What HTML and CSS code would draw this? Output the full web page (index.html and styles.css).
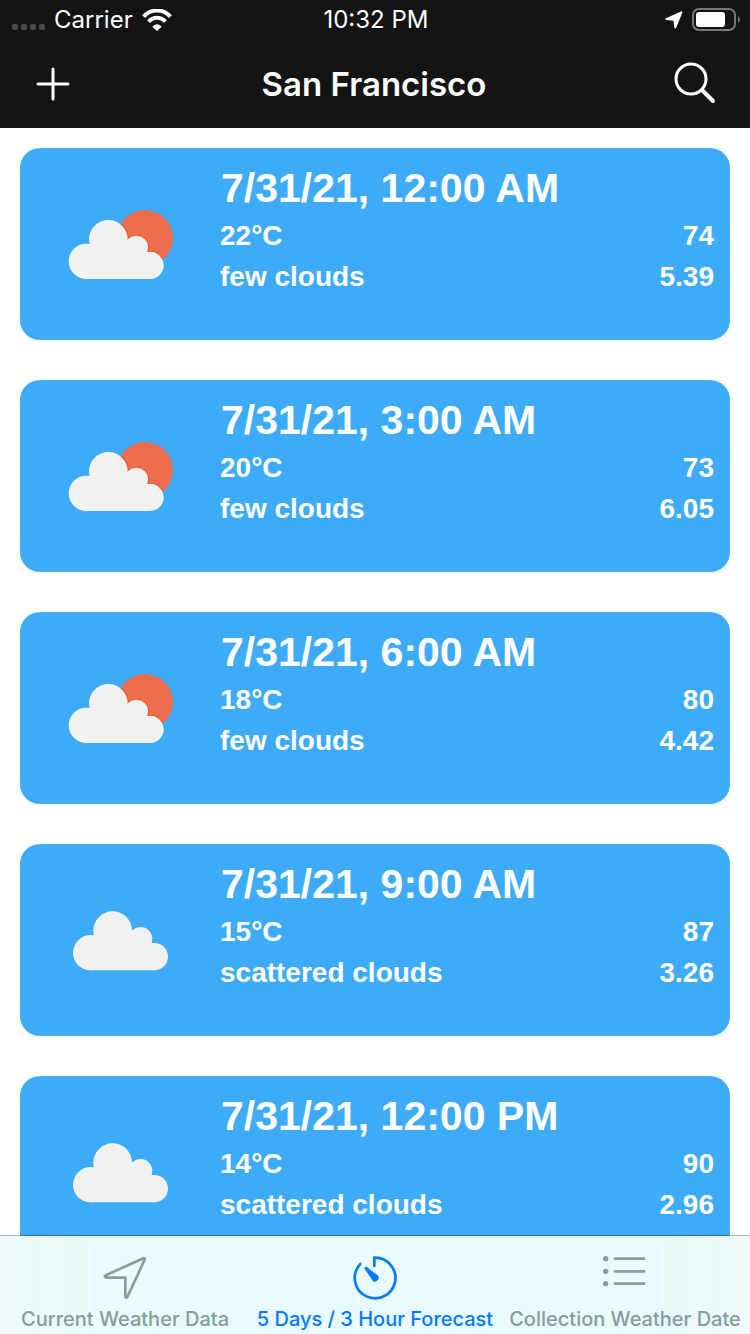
FILE: index.html
```html
<!DOCTYPE html>
<html lang="en">
<head>
<meta charset="utf-8">
<meta name="viewport" content="width=device-width, initial-scale=1">
<title>San Francisco</title>
<link rel="stylesheet" href="styles.css">
</head>
<body>
<svg class="defs" aria-hidden="true">
  <defs>
    <g id="cloud">
      <circle cx="92" cy="158" r="53"/>
      <circle cx="158" cy="92" r="58"/>
      <circle cx="242" cy="116" r="35"/>
      <circle cx="283" cy="170" r="41"/>
      <path d="M92 211V130H160V116H240V130H283V211Z"/>
    </g>
    <clipPath id="sun-clip"><circle cx="255" cy="162" r="84"/></clipPath>
    <symbol id="scattered-clouds" viewBox="0 0 360 360">
      <use href="#cloud" class="cloud" y="60"/>
    </symbol>
    <symbol id="few-clouds" viewBox="0 0 360 360">
      <circle class="sun" cx="255" cy="162" r="84"/>
      <g clip-path="url(#sun-clip)"><use href="#cloud" class="cloud-shadow" x="-13" y="74"/></g>
      <use href="#cloud" class="cloud" x="-13" y="74"/>
    </symbol>
  </defs>
</svg>
<div class="app">
  <header class="header">
    <div class="status">
      <div class="status-left">
        <span class="signal"><i></i><i></i><i></i><i></i></span>
        <span>Carrier</span>
        <svg class="wifi" viewBox="0 0 90 66" aria-hidden="true">
          <path class="line" stroke-width="12" d="M5 23A53 53 0 0 1 85 23M20 38A33 33 0 0 1 70 38"/>
          <path fill="currentColor" d="M45 66L31 53Q45 39 59 53Z"/>
        </svg>
      </div>
      <span>10:32 PM</span>
      <div class="status-right">
        <svg class="locate" viewBox="0 0 56 56" aria-hidden="true"><path fill="currentColor" stroke="currentColor" stroke-width="6" stroke-linejoin="round" d="M4 25L51 4L32 51L29 27Z"/></svg>
        <svg class="battery" viewBox="0 0 48 24" aria-hidden="true">
          <rect x="1" y="1" width="42" height="21" rx="6" fill="none" stroke="#777" stroke-width="2"/>
          <rect x="4" y="4" width="29" height="15" rx="3" fill="currentColor"/>
          <path d="M46 8Q50 11.500 46 15Z" fill="#777"/>
        </svg>
      </div>
    </div>
    <div class="navbar">
      <button class="icon-button" type="button" aria-label="Add">
        <svg viewBox="0 0 44 44"><path class="line" stroke-width="3" stroke-linecap="round" d="M22 7V37M7 22H37"/></svg>
      </button>
      <h1 class="title">San Francisco</h1>
      <button class="icon-button" type="button" aria-label="Search">
        <svg viewBox="0 0 44 44"><circle class="line" stroke-width="3" cx="18" cy="17" r="15"/><path class="line" stroke-width="4" stroke-linecap="round" d="M29 28L40 39"/></svg>
      </button>
    </div>
  </header>

  <main class="content">
    <ul class="forecast">
      <li class="card">
        <svg class="weather" role="img" aria-label="few clouds"><use href="#few-clouds"/></svg>
        <div class="info">
          <h2 class="time">7/31/21, 12:00 AM</h2>
          <p class="row"><span>22°C</span><span>74</span></p>
          <p class="row"><span>few clouds</span><span>5.39</span></p>
        </div>
      </li>
      <li class="card">
        <svg class="weather" role="img" aria-label="few clouds"><use href="#few-clouds"/></svg>
        <div class="info">
          <h2 class="time">7/31/21, 3:00 AM</h2>
          <p class="row"><span>20°C</span><span>73</span></p>
          <p class="row"><span>few clouds</span><span>6.05</span></p>
        </div>
      </li>
      <li class="card">
        <svg class="weather" role="img" aria-label="few clouds"><use href="#few-clouds"/></svg>
        <div class="info">
          <h2 class="time">7/31/21, 6:00 AM</h2>
          <p class="row"><span>18°C</span><span>80</span></p>
          <p class="row"><span>few clouds</span><span>4.42</span></p>
        </div>
      </li>
      <li class="card">
        <svg class="weather" role="img" aria-label="scattered clouds"><use href="#scattered-clouds"/></svg>
        <div class="info">
          <h2 class="time">7/31/21, 9:00 AM</h2>
          <p class="row"><span>15°C</span><span>87</span></p>
          <p class="row"><span>scattered clouds</span><span>3.26</span></p>
        </div>
      </li>
      <li class="card">
        <svg class="weather" role="img" aria-label="scattered clouds"><use href="#scattered-clouds"/></svg>
        <div class="info">
          <h2 class="time">7/31/21, 12:00 PM</h2>
          <p class="row"><span>14°C</span><span>90</span></p>
          <p class="row"><span>scattered clouds</span><span>2.96</span></p>
        </div>
      </li>
    </ul>
  </main>

  <nav class="tabbar">
    <a class="tab" href="#current">
      <svg viewBox="0 0 132 132" aria-hidden="true"><path class="line" stroke-width="8" stroke-linejoin="round" d="M8 58L121 7Q127 5 125 11L73 123Q69 128 67 122V65H10Q2 62 8 58Z"/></svg>
      <span>Current Weather Data</span>
    </a>
    <a class="tab tab-active" href="#forecast" aria-current="page">
      <svg viewBox="0 0 132 132" aria-hidden="true">
        <path class="line" stroke-width="8" stroke-linecap="round" stroke-linejoin="round" d="M64 30V5A61 61 0 1 1 22 24"/>
        <path fill="currentColor" d="M35 34Q37 31 41 33L74 58A11 11 0 0 1 59 74L36 40Q33 37 35 34Z"/>
      </svg>
      <span>5 Days / 3 Hour Forecast</span>
    </a>
    <a class="tab" href="#collection">
      <svg viewBox="0 0 132 132" aria-hidden="true">
        <g fill="currentColor"><circle cx="8" cy="8" r="8"/><circle cx="8" cy="46" r="8"/><circle cx="8" cy="83" r="8"/></g>
        <path class="line" stroke-width="8" stroke-linecap="round" d="M36 8H123M36 46H123M36 83H123"/>
      </svg>
      <span>Collection Weather Date</span>
    </a>
  </nav>
</div>
</body>
</html>
```
FILE: styles.css
```css
* {
  box-sizing: border-box;
}

body {
  margin: 0;
  background: #fff;
  font-family: Inter, Roboto, sans-serif;
}

h1, h2, p, ul {
  margin: 0;
  padding: 0;
}

svg {
  display: block;
  flex-shrink: 0;
}

.defs {
  position: absolute;
  width: 0;
  height: 0;
}

.line {
  fill: none;
  stroke: currentColor;
}

.app {
  display: flex;
  flex-direction: column;
  height: 100vh;
}

/* Header */
.header {
  flex-shrink: 0;
  background: #131413;
  color: #fff;
}

.status {
  display: grid;
  grid-template-columns: 1fr auto 1fr;
  align-items: center;
  height: 40px;
  padding: 0 10px 0 12px;
  font-size: 24px;
  line-height: 40px;
}

.status-left,
.status-right {
  display: flex;
  align-items: center;
  gap: 9px;
}

.status-right {
  justify-content: flex-end;
}

.signal {
  display: flex;
  gap: 3px;
  padding-top: 14px;
}

.signal i {
  width: 6px;
  height: 6px;
  border-radius: 2px;
  background: #4b4b4b;
}

.wifi {
  width: 30px;
  height: 22px;
}

.locate {
  width: 18px;
  height: 18px;
}

.battery {
  width: 48px;
  height: 24px;
}

.navbar {
  display: grid;
  grid-template-columns: 1fr auto 1fr;
  align-items: center;
  height: 88px;
  padding: 0 33px 0 31px;
}

.icon-button {
  width: 44px;
  height: 44px;
  padding: 0;
  border: 0;
  background: none;
  color: inherit;
}

.icon-button:last-child {
  justify-self: end;
}

.title {
  font-size: 33px;
  font-weight: 600;
  line-height: 44px;
}

/* Forecast list */
.content {
  flex: 1;
  min-height: 0;
  overflow-y: auto;
  scrollbar-width: none;
}

.forecast {
  display: flex;
  flex-direction: column;
  gap: 40px;
  padding: 20px;
  list-style: none;
}

.card {
  display: flex;
  align-items: flex-start;
  min-height: 192px;
  border-radius: 20px;
  background: #3dabf7;
  color: #fff;
  font-family: "Arial Rounded MT Bold", "Liberation Sans", Arial, sans-serif;
  font-weight: 700;
}

.weather {
  width: 120px;
  height: 120px;
  margin: 36px 40px;
}

.sun {
  fill: #ec6e4c;
}

.cloud {
  fill: #f1f1f0;
}

.cloud-shadow {
  fill: none;
  stroke: #e9582f;
  stroke-width: 6;
}

.info {
  flex: 1;
  padding: 14px 16px 0 0;
}

.time {
  margin-bottom: 1px;
  padding-left: 1px;
  font-size: 41px;
  line-height: 52px;
}

.row {
  display: flex;
  justify-content: space-between;
  font-size: 28px;
  line-height: 41px;
}

/* Tab bar: its hairline lies over the list */
.tabbar {
  position: relative;
  display: grid;
  grid-template-columns: repeat(3, 1fr);
  flex-shrink: 0;
  margin-top: -1px;
  border-top: 1px solid rgba(0, 0, 0, 0.3);
  background: linear-gradient(90deg, #eff9fb, #e9fbfc 12%, #e9fbfc 88%, #eff9fb) padding-box;
}

.tab {
  display: flex;
  flex-direction: column;
  align-items: center;
  gap: 7px;
  min-width: 0;
  padding: 20px 0 3px;
  color: #869c9e;
  font-size: 20px;
  font-weight: 500;
  line-height: 24px;
  text-decoration: none;
  white-space: nowrap;
}

.tab svg {
  width: 44px;
  height: 44px;
}

.tab-active {
  color: #057aff;
}
```
